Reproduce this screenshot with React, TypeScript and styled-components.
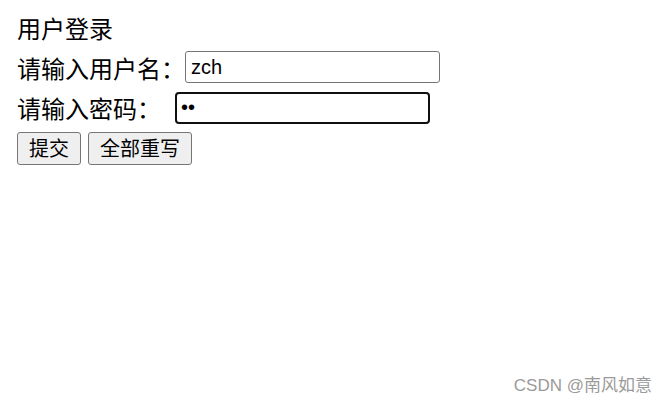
import React from "react";
import styled, { createGlobalStyle } from "styled-components";

const GlobalStyle = createGlobalStyle`
    html, body {
        margin: 0;
        padding: 0;
        background: #ffffff;
    }
    body {
        width: 667px;
        height: 404px;
        position: relative;
        overflow: hidden;
        font-family: "Noto Sans CJK SC", "Liberation Sans", sans-serif;
        color: #000000;
    }
`

const Page = styled.form`
    display: flex;
    flex-direction: column;
    padding: 7px 0 0 17px;
`

const Title = styled.div`
    height: 40px;
    display: flex;
    align-items: center;
    font-size: 24px;
`

const Row = styled.div<{ $height: number }>`
    height: ${({ $height }) => $height}px;
    display: flex;
    align-items: center;
`

const Label = styled.span<{ $width: number }>`
    width: ${({ $width }) => $width}px;
    font-size: 24px;
    white-space: nowrap;
`

const Field = styled.input<{ $focused?: boolean }>`
    box-sizing: border-box;
    width: 255px;
    height: 32px;
    margin: 0;
    padding: 0 ${({ $focused }) => ($focused ? 4 : 5)}px;
    font-family: "Liberation Sans", Arial, sans-serif;
    font-size: 20px;
    color: #000000;
    background: #ffffff;
    border: ${({ $focused }) => ($focused ? "2px solid #101010" : "1px solid #767676")};
    border-radius: ${({ $focused }) => ($focused ? 4 : 3)}px;
    outline: none;
`

const Buttons = styled.div`
    height: 40px;
    display: flex;
    align-items: center;
    gap: 7px;
`

const Button = styled.button`
    box-sizing: border-box;
    height: 33px;
    margin: 0;
    padding: 0 11px;
    font-family: "Noto Sans CJK SC", "Liberation Sans", sans-serif;
    font-size: 20px;
    line-height: 1;
    color: #000000;
    background: #efefef;
    border: 1px solid #767676;
    border-radius: 3px;
`

const Watermark = styled.div`
    position: absolute;
    right: 15px;
    bottom: 8px;
    font-family: "Liberation Sans", "Noto Sans CJK SC", sans-serif;
    font-size: 17px;
    color: #9a9a9a;
`

const App = () => {
    return (
        <>
            <GlobalStyle />
            <Page onSubmit={(e) => e.preventDefault()}>
                <Title>用户登录</Title>
                <Row $height={40}>
                    <Label $width={168}>请输入用户名：</Label>
                    <Field type="text" defaultValue="zch" />
                </Row>
                <Row $height={41}>
                    <Label $width={158}>请输入密码：</Label>
                    <Field type="password" defaultValue="12" $focused />
                </Row>
                <Buttons>
                    <Button type="submit">提交</Button>
                    <Button type="reset">全部重写</Button>
                </Buttons>
            </Page>
            <Watermark>CSDN @南风如意</Watermark>
        </>
    )
}

export default App
